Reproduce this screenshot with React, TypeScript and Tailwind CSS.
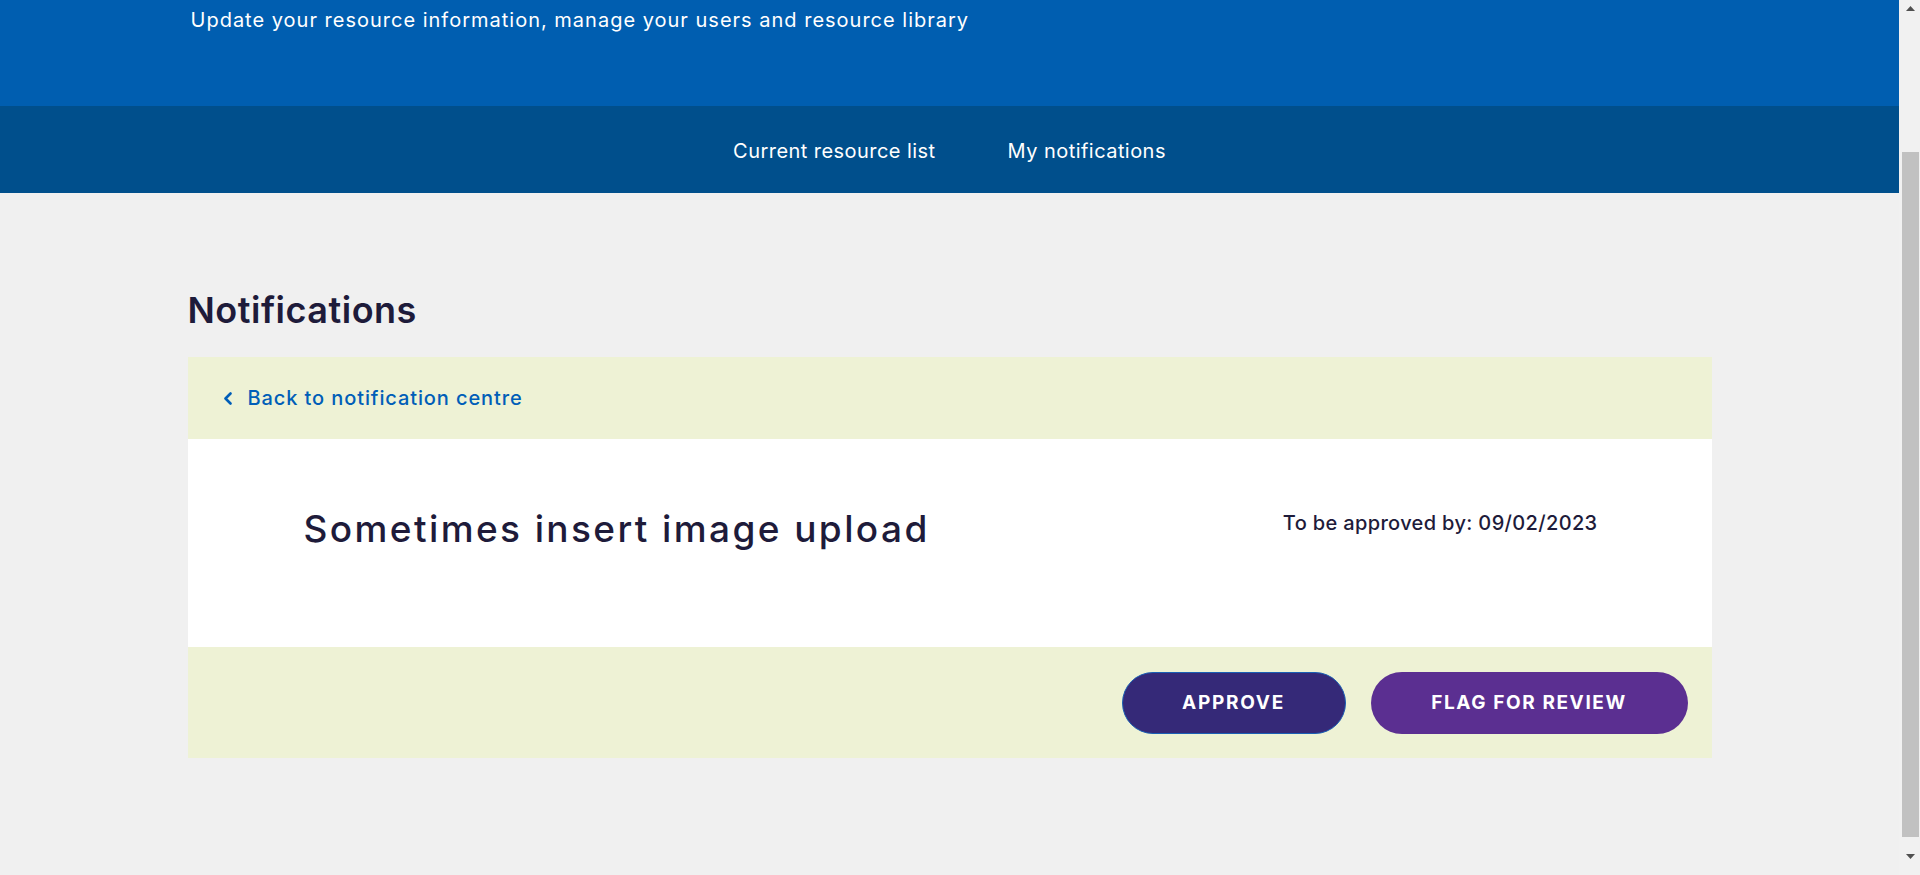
import React from 'react';

const navItems = ['Current resource list', 'My notifications'];

const FakeScrollbar: React.FC = () => (
  <div className="w-[21px] shrink-0 h-[875px] bg-[#f1f1f1] flex flex-col items-center pl-[2px]">
    <div className="h-[17px] flex items-center justify-center">
      <svg width="9" height="5" viewBox="0 0 9 5"><path d="M4.5 0 9 5H0z" fill="#505050" /></svg>
    </div>
    <div className="h-[135px]" />
    <div className="w-[17px] h-[685px] bg-[#c1c1c1]" />
    <div className="flex-1 flex items-center justify-center">
      <svg width="9" height="5" viewBox="0 0 9 5"><path d="M0 0h9L4.5 5z" fill="#505050" /></svg>
    </div>
  </div>
);

const App: React.FC = () => {
  return (
    <div className="flex h-[875px] overflow-hidden bg-[#f0f0f0] font-['Inter',sans-serif]">
      <div className="flex-1 flex flex-col">
        {/* Banner */}
        <header className="h-[106px] bg-[#005eb0] text-white">
          <div className="max-w-[1524px] mx-auto pt-[6px] pl-[3px]">
            <p className="text-[20px] leading-[28px] tracking-[1px]">
              Update your resource information, manage your users and resource library
            </p>
          </div>
        </header>

        {/* Nav */}
        <nav className="h-[87px] bg-[#004f8c] flex items-center justify-center gap-[72px] text-white text-[20px] tracking-[0.45px]">
          {navItems.map((item) => (
            <a key={item} href="#" className="leading-[28px] pt-[2px]">{item}</a>
          ))}
        </nav>

        <main className="max-w-[1524px] w-full mx-auto">
          <h1 className="mt-[95px] h-[44px] text-[36px] leading-[44px] font-semibold tracking-[0.5px] text-[#1e1b3a]">
            Notifications
          </h1>

          <section className="mt-[25px]">
            {/* Back link */}
            <div className="h-[82px] bg-[#eef2d5] flex items-center pl-[35px]">
              <a href="#" className="flex items-center gap-[15px] text-[#005eb8] text-[20px] font-medium tracking-[0.9px]">
                <svg width="10" height="13" viewBox="0 0 10 13" fill="none" stroke="currentColor" strokeWidth="2.6" strokeLinecap="round" strokeLinejoin="round">
                  <path d="M7.5 1.5 2.5 6.5l5 5" />
                </svg>
                <span>Back to notification centre</span>
              </a>
            </div>

            {/* Body */}
            <div className="h-[208px] bg-white flex items-start justify-between pl-[116px] pr-[114px] pt-[68px]">
              <h2 className="text-[37px] leading-[44px] font-medium tracking-[2.4px] text-[#1e1b3a]">
                Sometimes insert image upload
              </h2>
              <p className="mt-[2px] text-[20px] leading-[28px] font-medium tracking-[0.35px] text-[#1e1b3a]">
                To be approved by: 09/02/2023
              </p>
            </div>

            {/* Actions */}
            <div className="h-[111px] bg-[#eef2d5] flex justify-end items-start pt-[25px] pr-[24px] gap-[25px]">
              <button className="w-[224px] h-[62px] rounded-full bg-[#352978] border border-[#1a5fb4] text-white text-[19px] font-bold uppercase tracking-[1.7px]">
                Approve
              </button>
              <button className="w-[317px] h-[62px] rounded-full bg-[#5b2f91] text-white text-[19px] font-bold uppercase tracking-[1.6px]">
                Flag for review
              </button>
            </div>
          </section>
        </main>
      </div>
      <FakeScrollbar />
    </div>
  );
};

export default App;
